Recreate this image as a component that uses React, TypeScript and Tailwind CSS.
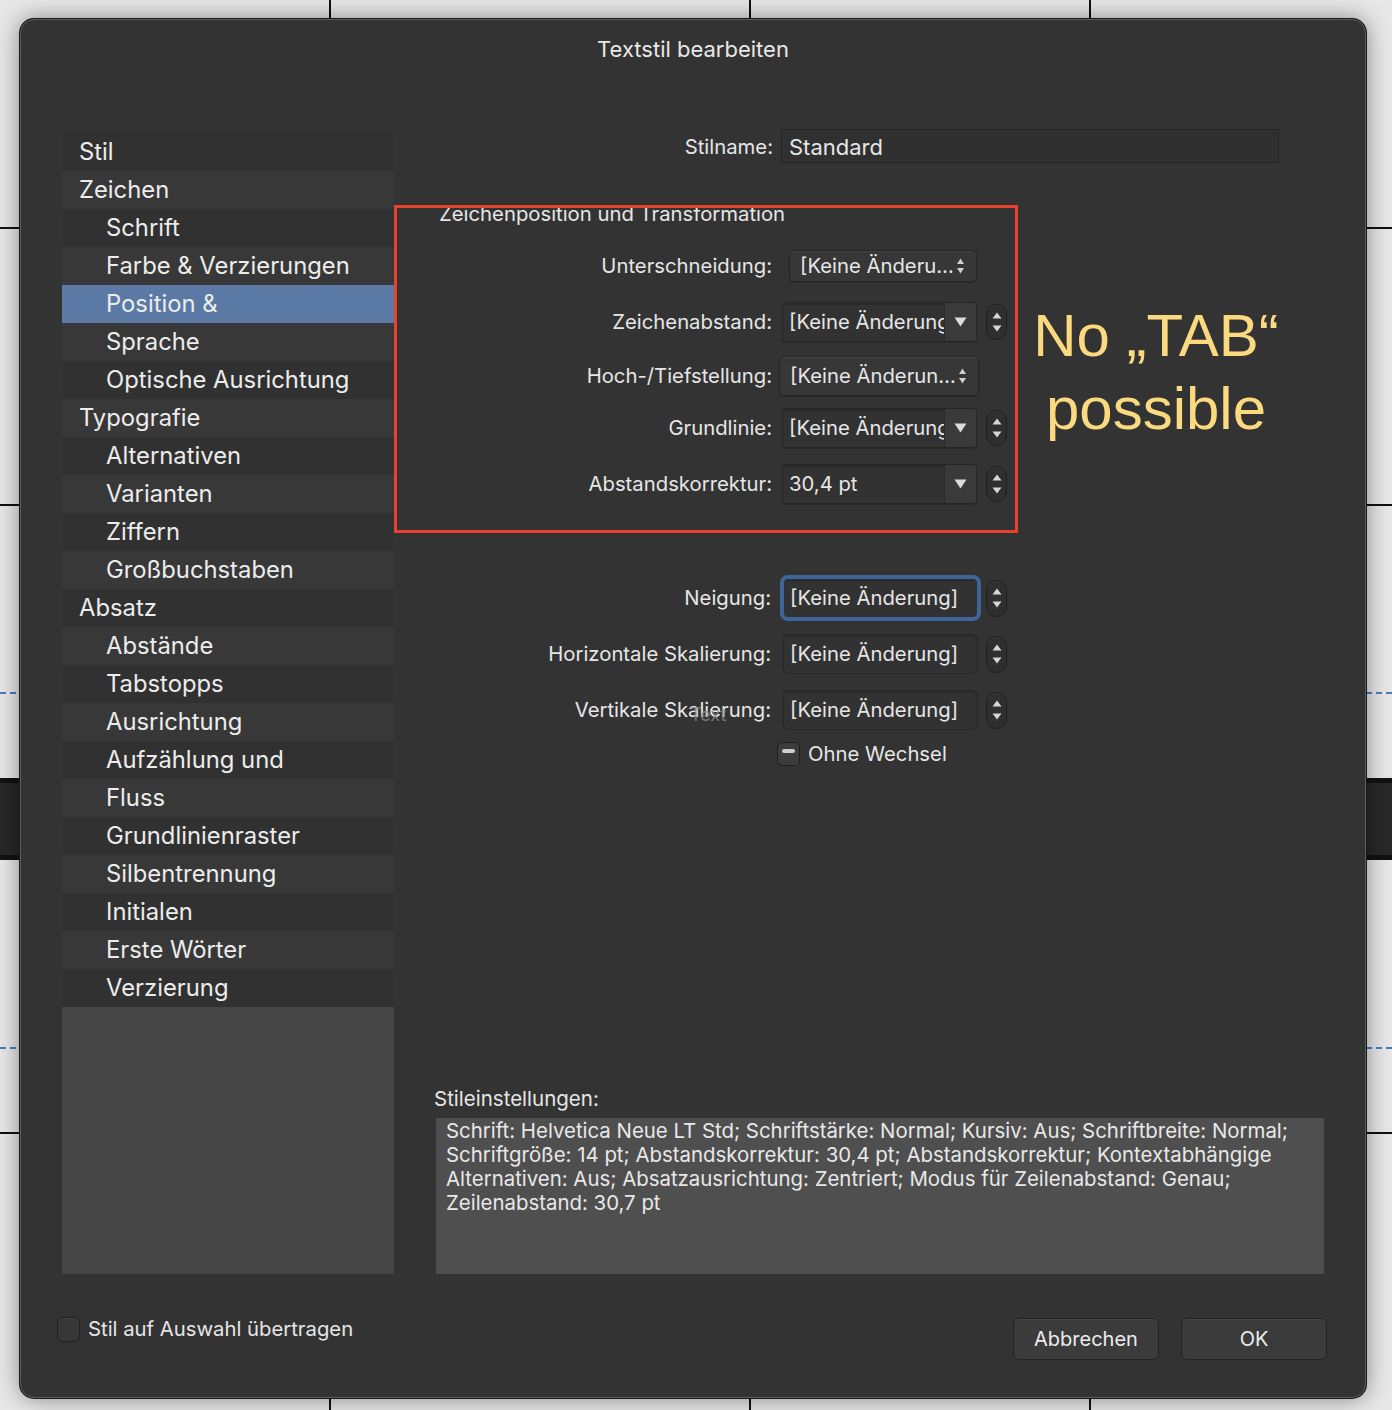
import React from "react";

const navItems: [string, number][] = [
  ["Stil", 0],
  ["Zeichen", 0],
  ["Schrift", 1],
  ["Farbe & Verzierungen", 1],
  ["Position &", 1],
  ["Sprache", 1],
  ["Optische Ausrichtung", 1],
  ["Typografie", 0],
  ["Alternativen", 1],
  ["Varianten", 1],
  ["Ziffern", 1],
  ["Großbuchstaben", 1],
  ["Absatz", 0],
  ["Abstände", 1],
  ["Tabstopps", 1],
  ["Ausrichtung", 1],
  ["Aufzählung und", 1],
  ["Fluss", 1],
  ["Grundlinienraster", 1],
  ["Silbentrennung", 1],
  ["Initialen", 1],
  ["Erste Wörter", 1],
  ["Verzierung", 1],
];

function PopupArrows() {
  return (
    <svg width="9" height="20" viewBox="0 0 9 20" className="shrink-0">
      <path d="M4.5 2.5 L8 8 L1 8 Z" fill="#cfcfcf" />
      <path d="M4.5 17.5 L8 12 L1 12 Z" fill="#cfcfcf" />
    </svg>
  );
}

function Stepper({ className }: { className: string }) {
  return (
    <div
      className={
        "flex flex-col items-center justify-center gap-[6px] rounded-full border border-[#1f1f1f] bg-[#2f2f2f] shadow-[inset_0_1px_0_rgba(255,255,255,0.06)] " +
        className
      }
    >
      <svg width="10" height="7" viewBox="0 0 10 7">
        <path d="M5 0.5 L9.5 6.5 H0.5 Z" fill="#d6d6d6" />
      </svg>
      <svg width="10" height="7" viewBox="0 0 10 7">
        <path d="M5 6.5 L9.5 0.5 H0.5 Z" fill="#d6d6d6" />
      </svg>
    </div>
  );
}

function Popup({ text, className }: { text: string; className: string }) {
  return (
    <div
      className={
        "flex items-center justify-between rounded-[5px] border border-[#262626] bg-[#373737] pl-[10px] pr-[11px] shadow-[inset_0_1px_0_rgba(255,255,255,0.07),0_1px_0_#2a2a2a] " +
        className
      }
    >
      <span className="whitespace-nowrap">{text}</span>
      <PopupArrows />
    </div>
  );
}

function Combo({ text, ml }: { text: string; ml: string }) {
  return (
    <div className={"flex items-center " + ml}>
      <div className="flex h-[40px] w-[195px] overflow-hidden rounded-[4px] border border-[#262626] bg-[#323232] shadow-[inset_0_2px_0_#2a2a2a,0_1px_0_#2b2b2b]">
        <div className="flex w-[161px] items-center overflow-hidden whitespace-nowrap pl-[6px]">{text}</div>
        <div className="flex flex-1 items-center justify-center border-l border-[#2a2a2a] bg-[#3a3a3a]">
          <svg width="13" height="10" viewBox="0 0 13 10">
            <path d="M0.5 0.5 H12.5 L6.5 9.5 Z" fill="#dcdcdc" />
          </svg>
        </div>
      </div>
      <Stepper className="ml-[9px] h-[36px] w-[21px]" />
    </div>
  );
}

function Field({ text, focused }: { text: string; focused?: boolean }) {
  return (
    <div
      className={
        "flex h-[40px] w-[195px] items-center rounded-[5px] border bg-[#323232] pl-[6px] shadow-[inset_0_2px_0_#2b2b2b] " +
        (focused ? "border-[#3d6598] ring-[3px] ring-[#3d6598]" : "border-[#262626]")
      }
    >
      <span className="whitespace-nowrap">{text}</span>
    </div>
  );
}

export default function App() {
  return (
    <div className="relative h-[1410px] w-full overflow-hidden bg-[#e8e8e8] font-['Inter',sans-serif] text-[#e6e6e6]">
      {/* layout canvas lines behind the dialog */}
      <div className="absolute left-[329px] top-0 h-full w-[2px] bg-[#111]" />
      <div className="absolute left-[749px] top-0 h-full w-[2px] bg-[#111]" />
      <div className="absolute left-[1089px] top-0 h-full w-[2px] bg-[#111]" />
      <div className="absolute left-0 top-[227px] h-[2px] w-full bg-[#111]" />
      <div className="absolute left-0 top-[504px] h-[2px] w-full bg-[#111]" />
      <div className="absolute left-0 top-[1132px] h-[2px] w-full bg-[#111]" />
      <div className="absolute left-0 top-[778px] h-[82px] w-full border-y-[5px] border-[#121212] bg-[#282828]" />
      <div className="absolute left-0 top-[692px] w-full border-t-2 border-dashed border-[#4b7cc0]" />
      <div className="absolute left-0 top-[1047px] w-full border-t-2 border-dashed border-[#4b7cc0]" />

      <div className="relative ml-[20px] mt-[19px] flex h-[1379px] w-[1346px] flex-col rounded-[14px] border border-[#5c5c5c] bg-[#333333] shadow-[0_0_0_1px_#1a1a1a,0_0_24px_rgba(0,0,0,0.45)]">
        <div className="pt-[17px] text-center text-[22px] leading-[24px] text-[#e8e8e8]">Textstil bearbeiten</div>

        <div className="mt-[68px] flex pl-[41px]">
          {/* sidebar */}
          <div className="mt-[4px] flex h-[1141px] w-[332px] flex-col bg-[#454545]">
            {navItems.map(([label, level], i) => (
              <div
                key={label}
                className={
                  "flex h-[38px] shrink-0 items-center text-[23.8px] text-[#ececec] " +
                  (level === 0 ? "pl-[17px] " : "pl-[44px] ") +
                  (i === 4 ? "bg-[#5a79a5]" : i % 2 ? "bg-[#383838]" : "bg-[#313131]")
                }
              >
                {label}
              </div>
            ))}
          </div>

          {/* right panel */}
          <div className="flex h-[1145px] flex-1 flex-col text-[20.3px]">
            <div className="flex h-[34px] items-center pt-[3px]">
              <div className="w-[379px] text-right">Stilname:</div>
              <div className="ml-[8px] mt-[-3px] flex h-[34px] w-[498px] items-center border border-[#232323] bg-[#303030] pl-[7px] pt-[3px] text-[22px]">
                Standard
              </div>
            </div>

            <div className="mt-[42px] flex items-start">
              <div className="h-[328px] w-[624px] overflow-hidden border-[3px] border-[#e8412c]">
                <div className="ml-[42px] mt-[-6px] h-[24px] leading-[24px]">Zeichenposition und Transformation</div>

                <div className="mt-[20px] flex h-[40px] items-center">
                  <div className="w-[375px] text-right">Unterschneidung:</div>
                  <Popup text="[Keine Änderu…" className="ml-[17px] h-[32px] w-[188px]" />
                </div>
                <div className="mt-[16px] flex h-[40px] items-center">
                  <div className="w-[375px] text-right">Zeichenabstand:</div>
                  <Combo text="[Keine Änderung]" ml="ml-[10px]" />
                </div>
                <div className="mt-[14px] flex h-[40px] items-center">
                  <div className="w-[375px] text-right">Hoch-/Tiefstellung:</div>
                  <Popup text="[Keine Änderun…" className="ml-[7px] h-[40px] w-[200px]" />
                </div>
                <div className="mt-[12px] flex h-[40px] items-center">
                  <div className="w-[375px] text-right">Grundlinie:</div>
                  <Combo text="[Keine Änderung]" ml="ml-[10px]" />
                </div>
                <div className="mt-[16px] flex h-[40px] items-center">
                  <div className="w-[375px] text-right">Abstandskorrektur:</div>
                  <Combo text="30,4 pt" ml="ml-[10px]" />
                </div>
              </div>

              <div className="ml-[12px] mt-[94px] w-[252px] text-center font-['Liberation_Sans',Arial,sans-serif] text-[60px] leading-[73px] text-[#fad97f]">
                <div className="whitespace-nowrap">No „TAB“</div>
                <div className="whitespace-nowrap">possible</div>
              </div>
            </div>

            <div className="mt-[45px] flex h-[40px] items-center">
              <div className="w-[377px] text-right">Neigung:</div>
              <div className="ml-[12px]">
                <Field text="[Keine Änderung]" focused />
              </div>
              <Stepper className="ml-[8px] h-[37px] w-[21px]" />
            </div>
            <div className="mt-[16px] flex h-[40px] items-center">
              <div className="w-[377px] text-right">Horizontale Skalierung:</div>
              <div className="ml-[12px]">
                <Field text="[Keine Änderung]" />
              </div>
              <Stepper className="ml-[8px] h-[37px] w-[21px]" />
            </div>
            <div className="mt-[16px] flex h-[40px] items-center">
              <div className="relative w-[377px] text-right">
                Vertikale Skalierung:
                <span className="absolute left-[296px] top-[6px] text-[18px] text-[#8a8a8a]/80">Text</span>
              </div>
              <div className="ml-[12px]">
                <Field text="[Keine Änderung]" />
              </div>
              <Stepper className="ml-[8px] h-[37px] w-[21px]" />
            </div>
            <div className="mt-[12px] flex h-[24px] items-center">
              <div className="ml-[383px] flex h-[24px] w-[23px] items-start justify-center rounded-[5px] border border-[#1f1f1f] bg-[#3c3c3c] pt-[6px]">
                <div className="h-[4px] w-[13px] rounded-full bg-[#cfcfcf]" />
              </div>
              <span className="ml-[8px]">Ohne Wechsel</span>
            </div>

            <div className="mt-auto">
              <div className="ml-[40px] text-[20.5px] leading-[24px]">Stileinstellungen:</div>
              <div className="ml-[42px] mt-[7px] h-[156px] w-[888px] bg-[#4f4f4f] pl-[10px] pr-[10px] pt-[1px] text-[20.4px] leading-[24px] text-[#e8e8e8]">
                Schrift: Helvetica Neue LT Std; Schriftstärke: Normal; Kursiv: Aus; Schriftbreite: Normal;
                Schriftgröße: 14 pt; Abstandskorrektur: 30,4 pt; Abstandskorrektur; Kontextabhängige
                Alternativen: Aus; Absatzausrichtung: Zentriert; Modus für Zeilenabstand: Genau;
                Zeilenabstand: 30,7 pt
              </div>
            </div>
          </div>
        </div>

        <div className="mt-[43px] flex items-start pl-[36px] pr-[38px]">
          <div className="flex h-[25px] items-center">
            <div className="h-[25px] w-[23px] rounded-[5px] border border-[#1f1f1f] bg-[#373737] shadow-[inset_0_1px_0_rgba(255,255,255,0.06)]" />
            <span className="ml-[8px] text-[20.3px]">Stil auf Auswahl übertragen</span>
          </div>
          <div className="ml-auto mt-[1px] flex gap-[22px]">
            <button className="h-[42px] w-[146px] rounded-[6px] border border-[#222] bg-[#3b3b3b] text-[20px] text-[#ececec] shadow-[inset_0_1px_0_rgba(255,255,255,0.07)]">
              Abbrechen
            </button>
            <button className="h-[42px] w-[146px] rounded-[6px] border border-[#222] bg-[#3b3b3b] text-[20px] text-[#ececec] shadow-[inset_0_1px_0_rgba(255,255,255,0.07)]">
              OK
            </button>
          </div>
        </div>
      </div>
    </div>
  );
}
